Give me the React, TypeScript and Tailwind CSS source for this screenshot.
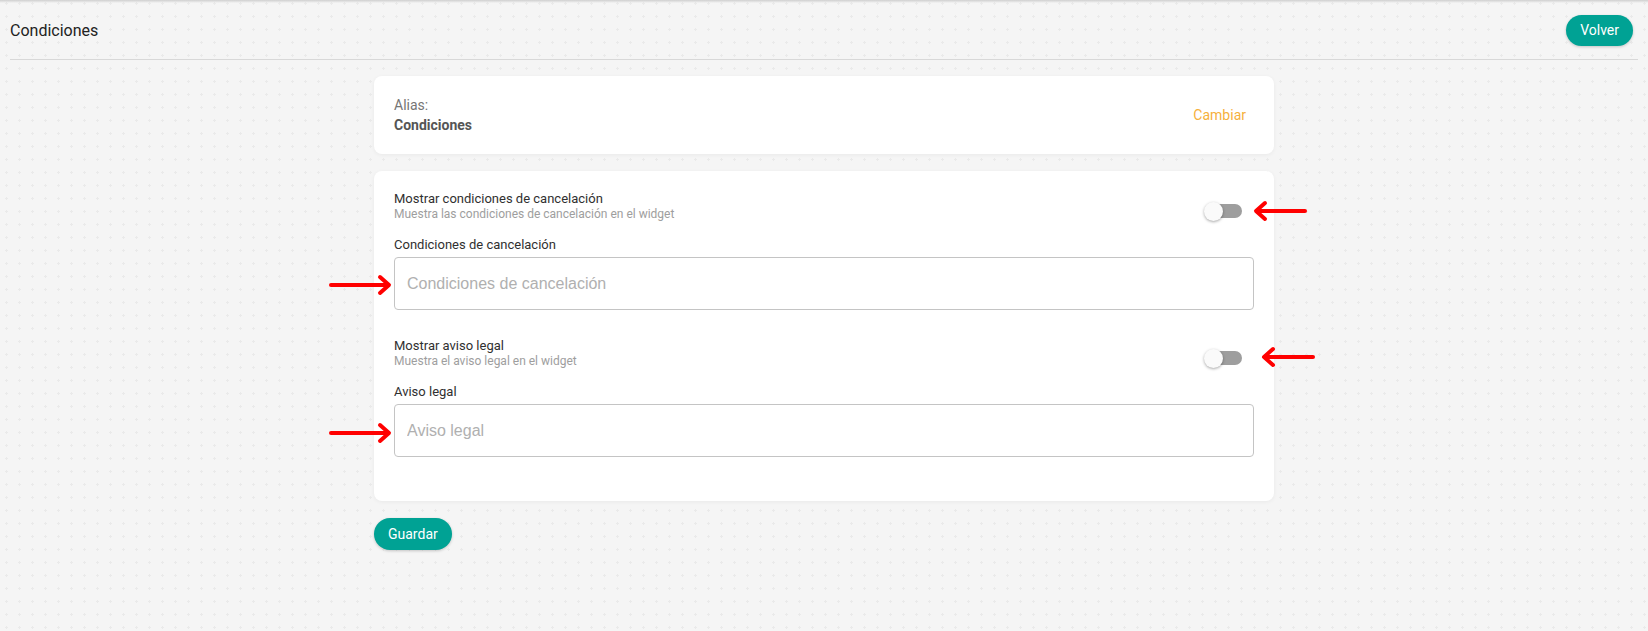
import { useState } from 'react';

function Toggle({ on, onChange }: { on: boolean; onChange: () => void }) {
  return (
    <button
      type="button"
      onClick={onChange}
      className="relative mt-[10px] mr-[12px] flex h-[20px] w-[38px] items-center"
    >
      <span className={`absolute right-0 h-[14px] w-[32px] rounded-full ${on ? 'bg-[#80d1c9]' : 'bg-[#9e9e9e]'}`} />
      <span
        className={`absolute h-[19px] w-[19px] rounded-full shadow-[0_1px_3px_rgba(0,0,0,0.35)] transition-all ${
          on ? 'left-[19px] bg-[#00a294]' : 'left-0 bg-[#fafafa]'
        }`}
      />
    </button>
  );
}

function Arrow({ dir, className }: { dir: 'left' | 'right'; className: string }) {
  return (
    <svg className={`absolute ${className}`} width="66" height="22" viewBox="0 0 66 22" fill="none">
      {dir === 'right' ? (
        <g stroke="#ff0000" strokeWidth="4" strokeLinecap="round" strokeLinejoin="round">
          <path d="M3 11H60" />
          <path d="M52 3L61 11L52 19" />
        </g>
      ) : (
        <g stroke="#ff0000" strokeWidth="4" strokeLinecap="round" strokeLinejoin="round">
          <path d="M6 11H54" />
          <path d="M14 3L5 11L14 19" />
        </g>
      )}
    </svg>
  );
}

function Section({
  title,
  subtitle,
  label,
  placeholder,
  on,
  onToggle,
}: {
  title: string;
  subtitle: string;
  label: string;
  placeholder: string;
  on: boolean;
  onToggle: () => void;
}) {
  return (
    <div>
      <div className="flex items-center justify-between">
        <div>
          <div className="text-[13px] leading-[16px] text-[#303030]">{title}</div>
          <div className="text-[12px] leading-[14px] text-[#9e9e9e]">{subtitle}</div>
        </div>
        <Toggle on={on} onChange={onToggle} />
      </div>
      <div className="mt-[16px] text-[13px] leading-[16px] text-[#303030]">{label}</div>
      <input
        placeholder={placeholder}
        className="mt-[4px] h-[53px] w-full rounded-[4px] border border-[#c4c4c4] bg-white px-[12px] font-['Liberation_Sans',Arial,sans-serif] text-[16px] text-[#333] outline-none placeholder:text-[#b0b0b0]"
      />
    </div>
  );
}

export default function App() {
  const [showCancel, setShowCancel] = useState(false);
  const [showLegal, setShowLegal] = useState(false);

  return (
    <div className="relative min-h-screen bg-[#f5f5f5] bg-[radial-gradient(circle,#eaeaea_1px,transparent_1.2px)] bg-[size:13px_13px] bg-[position:0px_-3px] font-['Roboto',sans-serif]">
      <div className="h-[3px] bg-gradient-to-b from-[#cfcfcf] to-transparent" />
      <div className="mx-[10px] flex h-[57px] items-center justify-between border-b border-[#d8d8d8] pr-[5px]">
        <h1 className="mt-[-1px] text-[16px] font-normal text-[#222]">Condiciones</h1>
        <button className="mt-[-1px] h-[31px] rounded-full bg-[#00a294] px-[14px] text-[14px] font-normal text-white shadow-[0_1px_3px_rgba(0,0,0,0.2)]">
          Volver
        </button>
      </div>

      <div className="mx-auto w-[900px] pt-[16px]">
        <div className="flex items-center justify-between rounded-[8px] bg-white py-[19px] pl-[20px] pr-[28px] shadow-[0_1px_4px_rgba(0,0,0,0.05)]">
          <div className="text-[14px] leading-[20px]">
            <div className="text-[#757575]">Alias:</div>
            <div className="font-bold text-[#555]">Condiciones</div>
          </div>
          <button className="text-[14px] font-normal text-[#f6b03c]">Cambiar</button>
        </div>

        <div className="mt-[17px] flex flex-col gap-[28px] rounded-[8px] bg-white px-[20px] pt-[20px] pb-[44px] shadow-[0_1px_4px_rgba(0,0,0,0.05)]">
          <Section
            title="Mostrar condiciones de cancelación"
            subtitle="Muestra las condiciones de cancelación en el widget"
            label="Condiciones de cancelación"
            placeholder="Condiciones de cancelación"
            on={showCancel}
            onToggle={() => setShowCancel(!showCancel)}
          />
          <Section
            title="Mostrar aviso legal"
            subtitle="Muestra el aviso legal en el widget"
            label="Aviso legal"
            placeholder="Aviso legal"
            on={showLegal}
            onToggle={() => setShowLegal(!showLegal)}
          />
        </div>

        <button className="mt-[17px] h-[32px] rounded-full bg-[#00a294] px-[14px] text-[14px] font-normal text-white shadow-[0_1px_3px_rgba(0,0,0,0.2)]">
          Guardar
        </button>
      </div>

      <Arrow dir="left" className="left-[1251px] top-[200px]" />
      <Arrow dir="right" className="left-[328px] top-[274px]" />
      <Arrow dir="left" className="left-[1259px] top-[346px]" />
      <Arrow dir="right" className="left-[328px] top-[422px]" />
    </div>
  );
}
